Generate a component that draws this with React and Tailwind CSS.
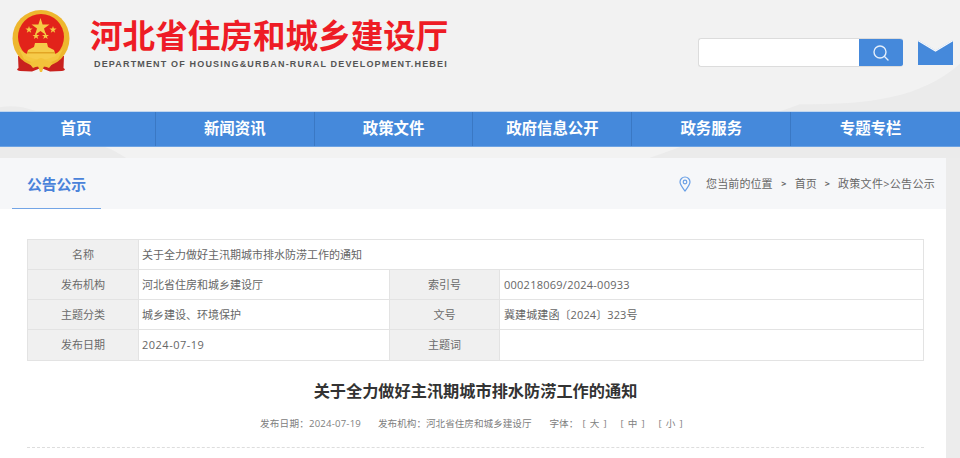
import React from "react";

const FONT = { fontFamily: '"Open Sans", "Noto Sans CJK SC", sans-serif' };

function Emblem() {
  return (
    <svg width="58" height="62" viewBox="0 0 58 62" className="shrink-0">
      <path d="M6 46 L6.5 58 Q3 60 8 61 L20 61.5 L29 58 L38 61.5 L50 61 Q55 60 51.5 58 L52 46 Z" fill="#c9211e" />
      <circle cx="29" cy="28.5" r="28.5" fill="#eeb72e" />
      <circle cx="29" cy="27" r="23" fill="#e2231a" />
      <path d="M7 39 Q29 56 51 39 L46 49 Q29 58 12 49 Z" fill="#f4c63f" />
      <polygon points="28.5,8 30.6,14.6 37.5,14.6 32,18.6 34,25 28.5,21 23,25 25,18.6 19.5,14.6 26.4,14.6" fill="#f6c944" />
      <polygon points="17,16 17.9,18.6 20.6,18.6 18.4,20.2 19.2,22.8 17,21.2 14.8,22.8 15.6,20.2 13.4,18.6 16.1,18.6" fill="#f6c944" />
      <polygon points="41,16 41.9,18.6 44.6,18.6 42.4,20.2 43.2,22.8 41,21.2 38.8,22.8 39.6,20.2 37.4,18.6 40.1,18.6" fill="#f6c944" />
      <polygon points="24,22.5 24.9,25 27.5,25 25.4,26.6 26.2,29 24,27.5 21.8,29 22.6,26.6 20.5,25 23.1,25" fill="#f6c944" />
      <polygon points="33.5,22.5 34.4,25 37,25 34.9,26.6 35.7,29 33.5,27.5 31.3,29 32.1,26.6 30,25 32.6,25" fill="#f6c944" />
      <path d="M22 37 L23 33 L35 33 L36 37 L42 40 L44 46 Q29 53 14 46 L16 40 Z" fill="#f6cb4a" />
      <rect x="15" y="42" width="28" height="1.5" fill="#e2a524" />
      <path d="M25 50 Q29 46 33 50 L41 53 L37 58 L32 56 L30 62 L28 62 L26 56 L21 58 L17 53 Z" fill="#f3c23a" />
    </svg>
  );
}

function Mountains() {
  return (
    <svg className="absolute left-0 top-0 w-full h-full" viewBox="0 0 960 158" preserveAspectRatio="none">
      <path d="M0 37 C30 35 60 42 100 50 C170 58 190 90 300 92 C350 88 380 85 420 84 C600 60 720 46 800 36 C870 36 920 34 960 22 L960 158 L0 158 Z" fill="#ebebeb" />
      <path d="M0 92 C60 98 100 106 160 114 L0 120 Z" fill="#e6e6e6" />
      <path d="M120 112 C200 104 250 98 310 84 C340 80 370 88 420 86 C480 90 520 100 560 112 Z" fill="#e2e2e2" />
      <path d="M480 92 C520 88 560 94 590 92 L660 112 L480 112 Z" fill="#eeeeee" />
      <path d="M0 147 H960 V158 H0 Z" fill="#dfe2e6" />
    </svg>
  );
}

const NAV = ["首页", "新闻资讯", "政策文件", "政府信息公开", "政务服务", "专题专栏"];

function Cell({ head, wide, children, colSpan }) {
  const cls = head
    ? "border border-[#e3e3e3] bg-[#f0f0f0] text-center text-[#6a6a6a] p-0"
    : `border border-[#e3e3e3] bg-white text-left text-[#666666] p-0 ${wide ? "pl-[4px]" : "pl-[3px]"}`;
  return (
    <td colSpan={colSpan} className={cls}>
      <div className="pt-[1px]">{children}</div>
    </td>
  );
}

function Size({ label }) {
  return (
    <span className="ml-[14px] w-[24px] flex justify-between">
      <span>[</span>
      <span>{label}</span>
      <span>]</span>
    </span>
  );
}

export default function App() {
  return (
    <div style={FONT} className="relative w-[960px] h-[458px] overflow-hidden bg-[#f2f2f2]">
      <Mountains />
      <div className="absolute right-0 top-[158px] bottom-0 w-[14px] bg-[#ececec]" />

      <div className="relative">
        <header className="h-[111px] flex items-start">
          <div className="ml-[12px] mt-[10px]">
            <Emblem />
          </div>
          <div className="ml-[20px] mt-[16px] w-[360px]">
            <div className="text-[32.6px] leading-[40px] font-bold text-[#ee1c25] whitespace-nowrap">河北省住房和城乡建设厅</div>
            <div className="ml-[4px] mt-[2px] text-[9px] leading-[12px] font-bold text-[#555555] tracking-[1.16px] whitespace-nowrap" style={{ fontFamily: '"Liberation Sans", sans-serif' }}>
              DEPARTMENT OF HOUSING&URBAN-RURAL DEVELOPMENT.HEBEI
            </div>
          </div>
          <div className="ml-[248px] mt-[38px] flex w-[205px] h-[29px] rounded-[3px] overflow-hidden border border-[#dcdcdc] border-r-0 bg-white">
            <div className="flex-1" />
            <div className="w-[44px] bg-[#4589db] flex items-center justify-center">
              <svg width="18" height="18" viewBox="0 0 18 18" fill="none" stroke="#e3eefb" strokeWidth="1.4" strokeLinecap="round">
                <circle cx="8" cy="8" r="6" />
                <path d="M12.5 12.5 L16 16" />
              </svg>
            </div>
          </div>
          <svg width="35" height="25" viewBox="0 0 35 25" className="ml-[15px] mt-[40px] shrink-0">
            <path d="M0 0 L17.5 10.5 L35 0 V25 H0 Z" fill="#4589db" />
            <path d="M0 0.5 L17.5 11 L35 0.5" fill="none" stroke="#f7f9fc" strokeWidth="1.3" />
          </svg>
        </header>

        <nav className="h-[36px] bg-[#4589db] border-y border-t-[#c2d6ee] border-b-[#6da3e3] overflow-hidden">
          <div className="-ml-[3px] grid grid-cols-6 w-[953px] h-full">
            {NAV.map((n, i) => (
              <div key={n} className={`flex items-center justify-center text-white font-bold text-[15.4px] ${i < 5 ? "border-r border-[#3a78c4]" : ""}`}>
                {n}
              </div>
            ))}
          </div>
        </nav>

        <main className="mt-[11px] w-[946px] h-[300px] bg-white">
          <div className="h-[51px] bg-[#f6f7f9] flex items-stretch justify-between">
            <div className="ml-[12px] w-[89px] border-b border-[#73a5e6] flex items-center justify-center text-[#4a83da] font-bold text-[14.8px] pt-[2px]">公告公示</div>
            <div className="flex items-center text-[11px] text-[#666666] mr-[11px] pt-[1px]">
              <svg width="12" height="16" viewBox="0 0 12 16" fill="none" stroke="#6aa0e6" strokeWidth="1.2" className="mr-[15px]">
                <path d="M6 15 C3 11 1 8.5 1 6 A5 5 0 0 1 11 6 C11 8.5 9 11 6 15 Z" />
                <circle cx="6" cy="6" r="1.8" />
              </svg>
              <span className="tracking-[0.1px]">您当前的位置</span>
              <span className="mx-[8.5px] font-bold text-[9px]">&gt;</span>
              <span>首页</span>
              <span className="mx-[8px] font-bold text-[9px]">&gt;</span>
              <span className="tracking-[0.3px]">政策文件&gt;公告公示</span>
            </div>
          </div>

          <div className="mx-[27px] mt-[30px] w-[897px]">
            <table className="w-[896px] border-collapse table-fixed text-[11px]">
              <colgroup>
                <col className="w-[111px]" />
                <col className="w-[251px]" />
                <col className="w-[110px]" />
                <col className="w-[424px]" />
              </colgroup>
              <tbody>
                <tr className="h-[30px]"><Cell head>名称</Cell><Cell colSpan={3}>关于全力做好主汛期城市排水防涝工作的通知</Cell></tr>
                <tr className="h-[30px]"><Cell head>发布机构</Cell><Cell>河北省住房和城乡建设厅</Cell><Cell head>索引号</Cell><Cell wide><span className="tracking-[0.25px]">000218069/2024-00933</span></Cell></tr>
                <tr className="h-[30px]"><Cell head>主题分类</Cell><Cell>城乡建设、环境保护</Cell><Cell head>文号</Cell><Cell wide><span className="tracking-[0.1px]">冀建城建函〔2024〕323号</span></Cell></tr>
                <tr className="h-[31px]"><Cell head>发布日期</Cell><Cell><span className="tracking-[0.5px]">2024-07-19</span></Cell><Cell head>主题词</Cell><Cell wide></Cell></tr>
              </tbody>
            </table>

            <h1 className="mt-[18px] text-center text-[16.2px] leading-[24px] font-bold text-[#333333]">关于全力做好主汛期城市排水防涝工作的通知</h1>

            <div className="mt-[14px] h-[31px] border-b border-dashed border-[#dddddd] flex text-[9.6px] leading-[14px] text-[#808080] whitespace-nowrap pl-[233px]">
              <span className="tracking-[0.2px]">发布日期：2024-07-19</span>
              <span className="ml-[17px]">发布机构：河北省住房和城乡建设厅</span>
              <span className="ml-[18px] w-[19px]">字体：</span>
              <Size label="大" />
              <Size label="中" />
              <Size label="小" />
            </div>
          </div>
        </main>
      </div>
    </div>
  );
}
